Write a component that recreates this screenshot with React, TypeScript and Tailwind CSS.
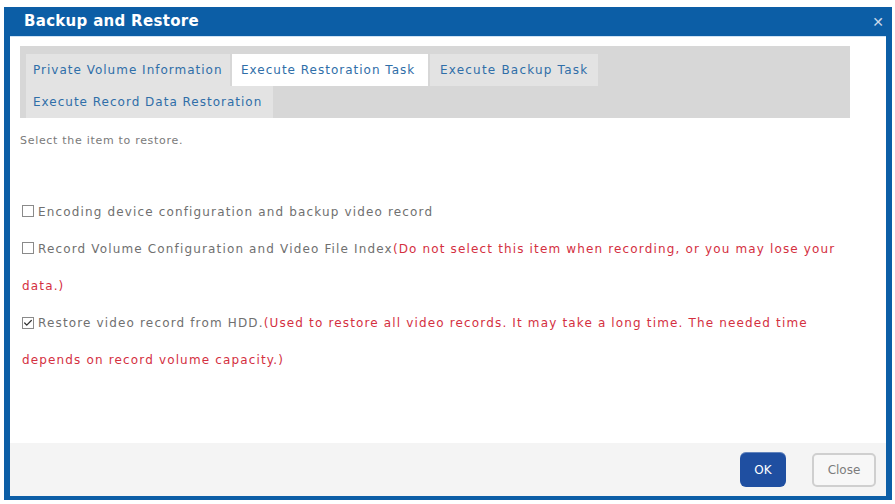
import { Check } from "lucide-react";

const font = { fontFamily: '"DejaVu Sans", Verdana, sans-serif' };

function Box({ checked }: { checked?: boolean }) {
  return (
    <span className="inline-flex items-center justify-center w-[12px] h-[12px] border border-[#8a8a8a] bg-white mr-[4px] align-[-1px]">
      {checked && <Check className="w-[10px] h-[10px] text-[#333]" strokeWidth={3} />}
    </span>
  );
}

export default function App() {
  return (
    <div className="w-[895px] h-[504px] bg-white pt-[7px] pl-[4px]" style={font}>
      <div className="w-[888px] h-[493px] flex flex-col bg-[#0c5ea6] px-[6px] pb-[4px]">
        {/* title bar */}
        <div className="h-[29px] flex items-center justify-between -mx-[6px] px-[20px] pr-[8px]">
          <span className="text-white font-bold text-[15px] tracking-[0.3px]">Backup and Restore</span>
          <span className="text-[#c9d9ea] text-[14px] font-bold leading-none">✕</span>
        </div>

        <div className="flex-1 flex flex-col bg-white border-t border-[#cfe3f5]">
          <div className="flex-1 px-[10px] pt-[9px]">
            {/* tabs */}
            <div className="w-[830px] bg-[#d7d7d7] pt-[8px] pl-[6px] text-[12px] tracking-[1px] text-[#2f6ea8] whitespace-nowrap">
              <div className="flex gap-[2px] h-[32px]">
                <div className="w-[204px] flex items-center px-[7px] bg-[#e3e3e3]">Private Volume Information</div>
                <div className="w-[196px] flex items-center px-[9px] bg-white">Execute Restoration Task</div>
                <div className="w-[168px] flex items-center px-[10px] bg-[#e3e3e3] tracking-[1.2px]">Execute Backup Task</div>
              </div>
              <div className="flex h-[32px]">
                <div className="w-[247px] flex items-center px-[7px] bg-[#e3e3e3]">Execute Record Data Restoration</div>
              </div>
            </div>

            <div className="mt-[4px] text-[11px] tracking-[0.7px] leading-[37px] text-[#7a7a7a]">
              Select the item to restore.
            </div>

            <div className="mt-[35px] w-[830px] pl-[2px] text-[12px] tracking-[1.15px] leading-[37px] text-[#707070]">
              <div>
                <Box />Encoding device configuration and backup video record
              </div>
              <div>
                <Box />Record Volume Configuration and Video File Index
                <span className="text-[#d4303f]">(Do not select this item when recording, or you may lose your data.)</span>
              </div>
              <div>
                <Box checked />Restore video record from HDD.
                <span className="text-[#d4303f]">(Used to restore all video records. It may take a long time. The needed time depends on record volume capacity.)</span>
              </div>
            </div>
          </div>

          {/* footer */}
          <div className="h-[53px] bg-[#f4f4f4] flex items-center justify-end gap-[26px] pr-[10px]">
            <button className="w-[46px] h-[35px] rounded-[6px] bg-[#1f4fa1] text-white text-[12px] shadow-[inset_0_1px_0_rgba(255,255,255,0.3)]">
              OK
            </button>
            <button className="w-[64px] h-[34px] rounded-[5px] bg-[#f7f7f7] border-2 border-[#cfcfcf] text-[#7c7c7c] text-[12px]">
              Close
            </button>
          </div>
        </div>
      </div>
    </div>
  );
}
